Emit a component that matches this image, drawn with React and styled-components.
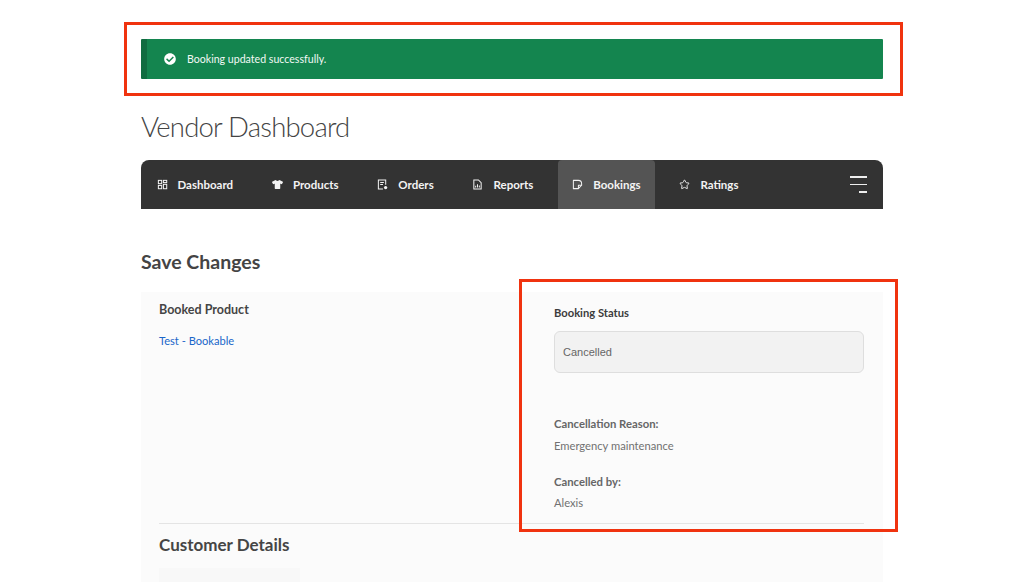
import React from 'react';
import styled, { createGlobalStyle } from 'styled-components';
import { FaCheckCircle, FaTshirt } from 'react-icons/fa';
import { LuStar } from 'react-icons/lu';

const Global = createGlobalStyle`
  html, body {
    margin: 0;
    height: 582px;
    overflow: hidden;
    background: #fff;
    font-family: Lato, "Liberation Sans", sans-serif;
    color: #3f3f3f;
  }
`;

const Page = styled.div`
  position: relative;
  width: 1024px;
  height: 582px;
  overflow: hidden;
  box-sizing: border-box;
  padding: 39px 141px 0;
`;

const Notice = styled.div`
  height: 40px;
  display: flex;
  align-items: center;
  gap: 11px;
  box-sizing: border-box;
  padding: 0 0 1px 17px;
  background: #14854f;
  border-left: 6px solid #106c40;
  border-radius: 1px;
  color: #f2f8f5;
  font-size: 10.6px;
`;

const Title = styled.h1`
  margin: 29px 0 14px;
  height: 38px;
  line-height: 38px;
  font-size: 27.5px;
  font-weight: 300;
  letter-spacing: -0.8px;
  color: #444;
`;

const Nav = styled.nav`
  height: 49px;
  display: flex;
  align-items: stretch;
  gap: 9.8px;
  padding: 0 16px 0 1px;
  background: #333;
  border-radius: 8px 8px 0 0;
`;

const Tab = styled.a`
  display: flex;
  align-items: center;
  gap: 10px;
  padding: 0 14.5px;
  border-radius: 4px 4px 0 0;
  background: ${(p) => (p.$active ? '#545454' : 'transparent')};
  color: #f3f3f3;
  font-size: 11.5px;
  font-weight: 700;
  svg {
    width: 11px;
    height: 11px;
    flex: none;
  }
`;

const Burger = styled.div`
  margin-left: auto;
  align-self: center;
  width: 17px;
  display: flex;
  flex-direction: column;
  align-items: flex-end;
  gap: 6px;
`;

const BurgerLine = styled.span`
  display: block;
  height: 1.5px;
  width: ${(p) => p.$width}px;
  background: #eee;
`;

const Heading = styled.h2`
  margin: 39px 0 17px;
  height: 27px;
  line-height: 27px;
  font-size: 19.5px;
  font-weight: 700;
  color: #444;
`;

const Panel = styled.section`
  background: #fbfbfb;
  padding: 0 19px 0 18px;
  height: 300px;
`;

const Columns = styled.div`
  display: grid;
  grid-template-columns: 395px 310px;
  height: 232px;
  box-sizing: border-box;
  border-bottom: 1px solid #e4e4e4;
`;

const LeftCol = styled.div`
  padding-top: 10px;
`;

const RightCol = styled.div`
  padding-top: 14px;
`;

const ProductLabel = styled.div`
  font-size: 12.5px;
  line-height: 16px;
  font-weight: 700;
  color: #454545;
`;

const ProductLink = styled.a`
  display: block;
  margin-top: 15px;
  font-size: 11.1px;
  line-height: 16px;
  color: #1a66c9;
`;

const StatusLabel = styled.div`
  font-size: 11.2px;
  line-height: 14px;
  font-weight: 700;
  color: #3c3c3c;
`;

const StatusBox = styled.div`
  margin-top: 11px;
  height: 42px;
  box-sizing: border-box;
  display: flex;
  align-items: center;
  padding-left: 8px;
  background: #f2f2f2;
  border: 1px solid #dedede;
  border-radius: 6px;
  font-family: "Liberation Sans", Arial, sans-serif;
  font-size: 11px;
  color: #666;
`;

const InfoLabel = styled.div`
  margin-top: ${(p) => p.$top}px;
  font-size: 11.3px;
  line-height: 14px;
  font-weight: 700;
  color: #666;
`;

const InfoValue = styled.div`
  margin-top: ${(p) => p.$top}px;
  font-size: 11.2px;
  line-height: 14px;
  color: #717171;
`;

const SubHeading = styled.h3`
  margin: 10px 0 0;
  font-size: 17px;
  line-height: 21px;
  font-weight: 700;
  color: #454545;
`;

const Placeholder = styled.div`
  margin-top: 13px;
  width: 141px;
  height: 20px;
  background: #f8f8f8;
`;

// red annotation frames drawn over the screenshot
const Frame = styled.div`
  position: absolute;
  left: ${(p) => p.$left}px;
  top: ${(p) => p.$top}px;
  width: ${(p) => p.$width}px;
  height: ${(p) => p.$height}px;
  box-sizing: border-box;
  border: 3px solid #f0330f;
`;

const DashIcon = () => (
  <svg viewBox="0 0 12 12" fill="none" stroke="currentColor" strokeWidth="1.1">
    <rect x="1.5" y="1.5" width="3.6" height="3.6" />
    <rect x="7" y="1.5" width="3.6" height="2.4" />
    <rect x="1.5" y="7" width="3.6" height="3.6" />
    <rect x="7" y="5.8" width="3.6" height="4.8" />
  </svg>
);

const OrdersIcon = () => (
  <svg viewBox="0 0 12 12" fill="none" stroke="currentColor" strokeWidth="1.1">
    <path d="M6.5 10.8H1.5V1.2h8v5" />
    <path d="M3.5 3.7h4M3.5 6h3" />
    <circle cx="9.4" cy="9.4" r="1.8" fill="currentColor" stroke="none" />
  </svg>
);

const ReportsIcon = () => (
  <svg viewBox="0 0 12 12" fill="none" stroke="currentColor" strokeWidth="1.1">
    <path d="M2 1h5l3 3v7H2z" />
    <path d="M4 9.2V7.4M6 9.2V5.8M8 9.2V7" />
  </svg>
);

const BookingIcon = () => (
  <svg viewBox="0 0 12 12" fill="none" stroke="currentColor" strokeWidth="1.1" strokeLinejoin="round">
    <path d="M1.5 1.5H7C9.3 1.5 10.5 3.2 10.5 5.2V6.8L7 10.5H1.5Z" />
    <path d="M10.5 6.8H7V10.5" />
  </svg>
);

const tabs = [
  { label: 'Dashboard', icon: <DashIcon /> },
  { label: 'Products', icon: <FaTshirt /> },
  { label: 'Orders', icon: <OrdersIcon /> },
  { label: 'Reports', icon: <ReportsIcon /> },
  { label: 'Bookings', icon: <BookingIcon />, active: true },
  { label: 'Ratings', icon: <LuStar /> },
];

export default function App() {
  return (
    <Page>
      <Global />
      <Notice>
        <FaCheckCircle size={12} color="#fff" />
        Booking updated successfully.
      </Notice>
      <Title>Vendor Dashboard</Title>
      <Nav>
        {tabs.map((t) => (
          <Tab key={t.label} $active={t.active}>
            {t.icon}
            {t.label}
          </Tab>
        ))}
        <Burger>
          <BurgerLine $width={17} />
          <BurgerLine $width={17} />
          <BurgerLine $width={8} />
        </Burger>
      </Nav>
      <Heading>Save Changes</Heading>
      <Panel>
        <Columns>
          <LeftCol>
            <ProductLabel>Booked Product</ProductLabel>
            <ProductLink>Test - Bookable</ProductLink>
          </LeftCol>
          <RightCol>
            <StatusLabel>Booking Status</StatusLabel>
            <StatusBox>Cancelled</StatusBox>
            <InfoLabel $top={44}>Cancellation Reason:</InfoLabel>
            <InfoValue $top={8}>Emergency maintenance</InfoValue>
            <InfoLabel $top={22}>Cancelled by:</InfoLabel>
            <InfoValue $top={7}>Alexis</InfoValue>
          </RightCol>
        </Columns>
        <SubHeading>Customer Details</SubHeading>
        <Placeholder />
      </Panel>
      <Frame $left={124} $top={22} $width={779} $height={74} />
      <Frame $left={519} $top={279} $width={379} $height={253} />
    </Page>
  );
}
